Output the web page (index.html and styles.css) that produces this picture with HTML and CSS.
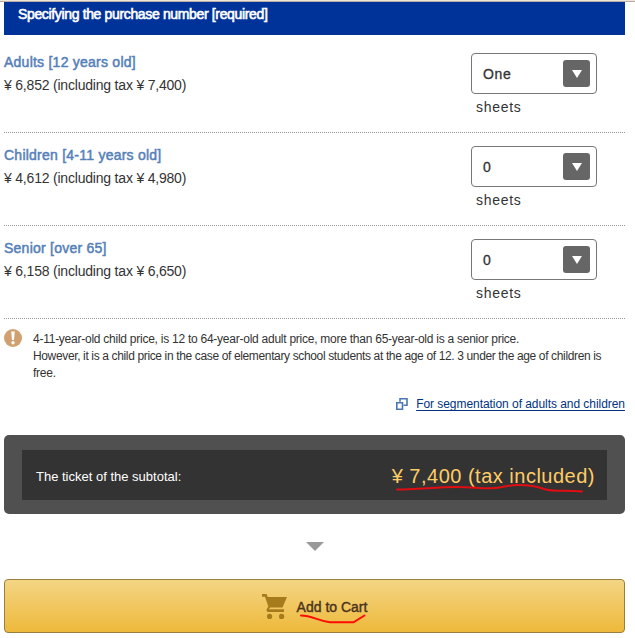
FILE: index.html
```html
<!DOCTYPE html>
<html lang="en">
<head>
    <meta charset="UTF-8">
    <meta name="viewport" content="width=device-width, initial-scale=1.0">
    <title>Purchase number</title>
    <link rel="stylesheet" href="styles.css">
</head>
<body>
    <div class="topline"></div>
    <div class="container">
        <h2 class="heading">Specifying the purchase number [required]</h2>
        <ul class="tickets">
            <li class="ticket">
                <div class="info">
                    <h3>Adults [12 years old]</h3>
                    <p>¥ 6,852 (including tax ¥ 7,400)</p>
                </div>
                <div class="count">
                    <div class="select">
                        <span class="value">One</span>
                        <span class="arrow"></span>
                    </div>
                    <span class="sheets">sheets</span>
                </div>
            </li>
            <li class="ticket">
                <div class="info">
                    <h3>Children [4-11 years old]</h3>
                    <p>¥ 4,612 (including tax ¥ 4,980)</p>
                </div>
                <div class="count">
                    <div class="select">
                        <span class="value">0</span>
                        <span class="arrow"></span>
                    </div>
                    <span class="sheets">sheets</span>
                </div>
            </li>
            <li class="ticket">
                <div class="info">
                    <h3>Senior [over 65]</h3>
                    <p>¥ 6,158 (including tax ¥ 6,650)</p>
                </div>
                <div class="count">
                    <div class="select">
                        <span class="value">0</span>
                        <span class="arrow"></span>
                    </div>
                    <span class="sheets">sheets</span>
                </div>
            </li>
        </ul>
        <div class="note">
            <svg class="note-icon" width="18" height="18" viewBox="0 0 18 18">
                <circle cx="9" cy="9" r="9" fill="#d0a070"/>
                <path d="M7.2 2.500h3.600l-.8 8.500H8z" fill="#fff"/>
                <circle cx="9" cy="13.800" r="1.700" fill="#fff"/>
            </svg>
            <p>
                4-11-year-old child price, is 12 to 64-year-old adult price, more than 65-year-old is a senior price.<br>
                <span class="long">However, it is a child price in the case of elementary school students at the age of 12. 3 under the age of children is</span><br>
                free.
            </p>
        </div>
        <div class="link">
            <svg width="13" height="12" viewBox="0 0 13 12" fill="none" stroke="#4a76b4" stroke-width="1.6">
                <path d="M5 3.800V.8h7v6.400H8.500"/>
                <path d="M1.800 4.800h5.700v6.400H1.800z"/>
            </svg>
            <a href="#">For segmentation of adults and children</a>
        </div>
        <div class="subtotal">
            <div class="subtotal-inner">
                <span class="label">The ticket of the subtotal:</span>
                <span class="total">¥ 7,400 (tax included)
                    <svg class="mark" width="190" height="10" viewBox="0 0 190 10">
                        <path d="M1 5.500C20 5.500 42 3 60 3s22 1.500 35 1.200S110 1 122 1s18 1 26 4 20 1 38 2.500" fill="none" stroke="#e00d12" stroke-width="2" stroke-linecap="round"/>
                    </svg>
                </span>
            </div>
        </div>
        <div class="down"></div>
        <button class="cart">
            <svg width="25" height="25" viewBox="0 0 25 25" fill="#a57b1c">
                <path d="M0 0h4.500l1.300 3H25l-4.500 10.500H8L7 15.300h15v2.700H5.500L4.300 16l2-3.600L3 2.800H0z"/>
                <circle cx="7.600" cy="22.400" r="2.600"/>
                <circle cx="19.600" cy="22.400" r="2.600"/>
            </svg>
            <span class="cart-text">Add to Cart
                <svg class="mark" width="68" height="10" viewBox="0 0 68 10">
                    <path d="M2 1.500C13 1.500 18 6.500 31 8.300H54.500L65.500 1.500" fill="none" stroke="#fb0d05" stroke-width="2" stroke-linecap="round"/>
                </svg>
            </span>
        </button>
    </div>
</body>
</html>
```

FILE: styles.css
```css
* {
    box-sizing: border-box;
}
body {
    margin: 0;
    background: #fff;
    color: #333;
    font-family: "Liberation Sans", Arial, sans-serif;
    font-size: 14px;
}
h2, h3, p, ul {
    margin: 0;
    padding: 0;
}
.topline {
    height: 2px;
    background: linear-gradient(#eee6dc 50%, #b9ada3 50%);
}
.container {
    width: 621px;
    margin-left: 4px;
}
.heading {
    height: 33px;
    padding-left: 14px;
    background: #003399;
    color: #fff;
    font-size: 14px;
    font-weight: normal;
    line-height: 25px;
    letter-spacing: -0.35px;
    white-space: nowrap;
    -webkit-text-stroke: 0.6px #fff;
}
.tickets {
    margin-top: 5px;
    list-style: none;
}
.ticket {
    display: flex;
    justify-content: space-between;
    height: 93px;
    padding: 13px 28px 0 0;
    border-bottom: 1px dotted #999;
    white-space: nowrap;
}
.info h3 {
    color: #5580b8;
    font-size: 14px;
    font-weight: normal;
    line-height: 18px;
    letter-spacing: 0.24px;
    -webkit-text-stroke: 0.5px #5580b8;
}
.info p {
    margin-top: 5px;
    line-height: 18px;
    letter-spacing: -0.2px;
}
.select {
    display: flex;
    justify-content: space-between;
    align-items: center;
    width: 126px;
    height: 41px;
    padding: 0 6px 0 11px;
    border: 1px solid #777;
    border-radius: 4px;
}
.value {
    font-size: 14px;
    letter-spacing: 0.7px;
    -webkit-text-stroke: 0.3px #333;
}
.arrow {
    display: flex;
    justify-content: center;
    align-items: center;
    width: 27px;
    height: 27px;
    border-radius: 3px;
    background: #666;
}
.arrow::before {
    content: "";
    margin-top: 1px;
    border: 5px solid transparent;
    border-top: 8px solid #fff;
    border-bottom: 0;
}
.sheets {
    display: block;
    padding-left: 5px;
    line-height: 26px;
    letter-spacing: 0.7px;
}
.note {
    display: flex;
    gap: 11px;
    padding-top: 12px;
    font-size: 12px;
    line-height: 17px;
    letter-spacing: -0.25px;
    white-space: nowrap;
}
.note-icon {
    flex: none;
    margin-top: -2px;
}
.long {
    letter-spacing: -0.36px;
}
.link {
    display: flex;
    justify-content: flex-end;
    align-items: center;
    gap: 8px;
    height: 18px;
    margin-top: 13px;
    font-size: 12px;
    letter-spacing: -0.05px;
    white-space: nowrap;
}
.link a {
    color: #003380;
    text-underline-offset: 2px;
}
.subtotal {
    height: 79px;
    margin-top: 22px;
    padding: 15px 18px 14px;
    border-radius: 5px;
    background: #505050;
}
.subtotal-inner {
    display: flex;
    justify-content: space-between;
    align-items: center;
    height: 50px;
    padding: 2px 12px 0 14px;
    background: #333;
    color: #fff;
    white-space: nowrap;
}
.label {
    font-size: 13px;
}
.total {
    position: relative;
    color: #ffcc66;
    font-size: 20px;
    letter-spacing: 0.5px;
}
.total .mark {
    position: absolute;
    left: 4px;
    top: 19px;
}
.down {
    width: 18px;
    margin: 28px auto;
    border: 9px solid transparent;
    border-top-color: #999;
    border-bottom: 0;
}
.cart {
    display: flex;
    justify-content: center;
    align-items: center;
    gap: 10px;
    width: 621px;
    height: 54px;
    padding: 1px 0 0;
    border: 1px solid #98803c;
    border-radius: 4px;
    background: linear-gradient(#f3d584, #eeb93b);
    color: #4b3320;
    font-family: inherit;
    font-size: 14px;
    white-space: nowrap;
}
.cart-text {
    position: relative;
    -webkit-text-stroke: 0.4px #4b3320;
}
.cart-text .mark {
    position: absolute;
    left: 2px;
    top: 15px;
}
```
